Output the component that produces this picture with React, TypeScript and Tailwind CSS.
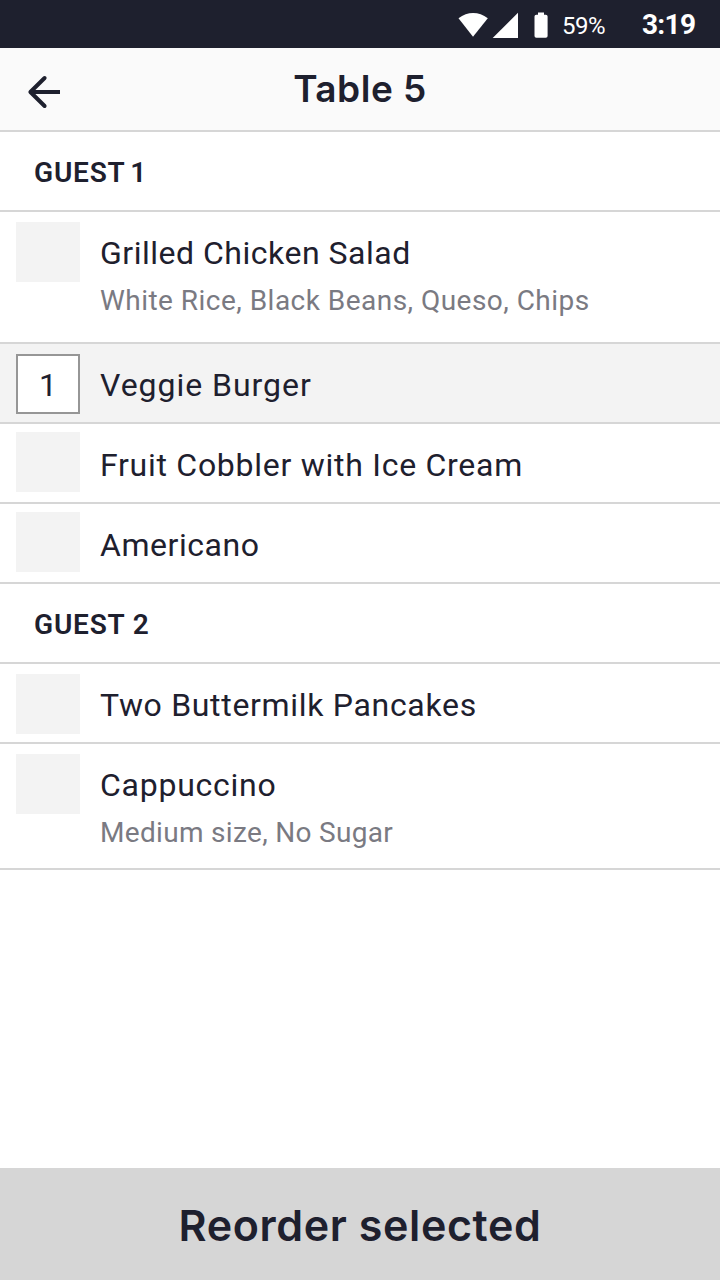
import React from 'react';

type Item = {
  name: string;
  tracking: string;
  note?: string;
  noteTracking?: string;
  quantity?: number;
  height: string;
  boxOffset: string;
};

const guestOne: Item[] = [
  {
    name: 'Grilled Chicken Salad',
    tracking: 'tracking-[0.51px]',
    note: 'White Rice, Black Beans, Queso, Chips',
    noteTracking: 'tracking-[0.47px]',
    height: 'h-[132px]',
    boxOffset: 'mt-2.5',
  },
  { name: 'Veggie Burger', tracking: 'tracking-[0.97px]', quantity: 1, height: 'h-20', boxOffset: 'mt-2.5' },
  { name: 'Fruit Cobbler with Ice Cream', tracking: 'tracking-[0.73px]', height: 'h-20', boxOffset: 'mt-2' },
  { name: 'Americano', tracking: 'tracking-[0.55px]', height: 'h-20', boxOffset: 'mt-2' },
];

const guestTwo: Item[] = [
  { name: 'Two Buttermilk Pancakes', tracking: 'tracking-[0.68px]', height: 'h-20', boxOffset: 'mt-2.5' },
  {
    name: 'Cappuccino',
    tracking: 'tracking-[0.75px]',
    note: 'Medium size, No Sugar',
    noteTracking: 'tracking-[0.32px]',
    height: 'h-[126px]',
    boxOffset: 'mt-2.5',
  },
];

function StatusBar() {
  return (
    <div className="flex h-12 shrink-0 items-center bg-[#1e202e] pl-[458px] text-white">
      <svg className="h-12 w-[92px] shrink-0" viewBox="0 0 92 48" fill="currentColor">
        <path d="M0.5 18.3C9.5 11.2 20.8 11.2 29.8 18.3L15 36.7Z" />
        <path d="M60 12.7V38H34.7Z" />
        <path d="M80 12.4H86V14.8H87.8Q89.6 14.8 89.6 16.6V36Q89.6 37.8 87.8 37.8H78.3Q76.5 37.8 76.5 36V16.6Q76.5 14.8 78.3 14.8H80Z" />
      </svg>
      <span className="ml-3 mt-[3px] w-20 text-2xl leading-8 tracking-[-0.5px]">59%</span>
      <span className="mt-0.5 text-[28px] leading-8 font-bold tracking-[-0.7px]">3:19</span>
    </div>
  );
}

function GuestHeading({ children, spacing = '' }: { children: React.ReactNode; spacing?: string }) {
  return (
    <h2
      className={`flex h-20 items-center border-b-2 border-[#d6d6d6] pt-1 pl-[34px] text-[28px] leading-9 font-semibold tracking-[0.8px] ${spacing}`}
    >
      {children}
    </h2>
  );
}

function ItemRow({ item }: { item: Item }) {
  const selected = item.quantity !== undefined;
  return (
    <li className={`flex gap-5 border-b-2 border-[#d6d6d6] pl-4 ${item.height} ${selected ? 'bg-[#f3f3f3]' : 'bg-white'}`}>
      <div
        className={`flex h-[60px] w-16 shrink-0 items-center justify-center text-[32px] leading-10 ${item.boxOffset} ${
          selected ? 'border-2 border-[#969696] bg-white pt-0.5' : 'bg-[#f3f3f3]'
        }`}
      >
        {item.quantity}
      </div>
      <div className="pt-[21px]">
        <p className={`text-[32px] leading-10 ${item.tracking}`}>{item.name}</p>
        {item.note && <p className={`mt-2.5 text-[28px] leading-9 text-[#7a7a82] ${item.noteTracking}`}>{item.note}</p>}
      </div>
    </li>
  );
}

export default function App() {
  return (
    <div className="flex h-[1280px] w-[720px] flex-col overflow-hidden bg-white font-['Roboto',sans-serif] whitespace-nowrap text-[#1e202e]">
      <StatusBar />
      <header className="grid h-[84px] shrink-0 grid-cols-[92px_1fr_92px] items-center border-b-2 border-[#d6d6d6] bg-[#fafafa]">
        <button aria-label="Back" className="pl-6">
          <svg className="mt-1.5 h-10 w-10" viewBox="0 0 40 40" fill="none" stroke="currentColor" strokeWidth="4">
            <path d="M36 20H7" />
            <path d="M20.6 6L6.4 20L20.6 34" strokeLinecap="round" strokeLinejoin="round" />
          </svg>
        </button>
        <h1 className="text-center font-['Inter',sans-serif] text-[37px] leading-10 font-semibold tracking-[0.5px]">
          Table 5
        </h1>
      </header>
      <main className="flex-1">
        <GuestHeading spacing="[word-spacing:-2.5px]">GUEST 1</GuestHeading>
        <ul>
          {guestOne.map((item) => (
            <ItemRow key={item.name} item={item} />
          ))}
        </ul>
        <GuestHeading>GUEST 2</GuestHeading>
        <ul>
          {guestTwo.map((item) => (
            <ItemRow key={item.name} item={item} />
          ))}
        </ul>
      </main>
      <button className="flex h-28 shrink-0 items-center justify-center bg-[#d6d6d6] pt-0.5 font-['Inter',sans-serif] text-[43px] leading-none font-semibold tracking-[0.6px]">
        Reorder selected
      </button>
    </div>
  );
}
